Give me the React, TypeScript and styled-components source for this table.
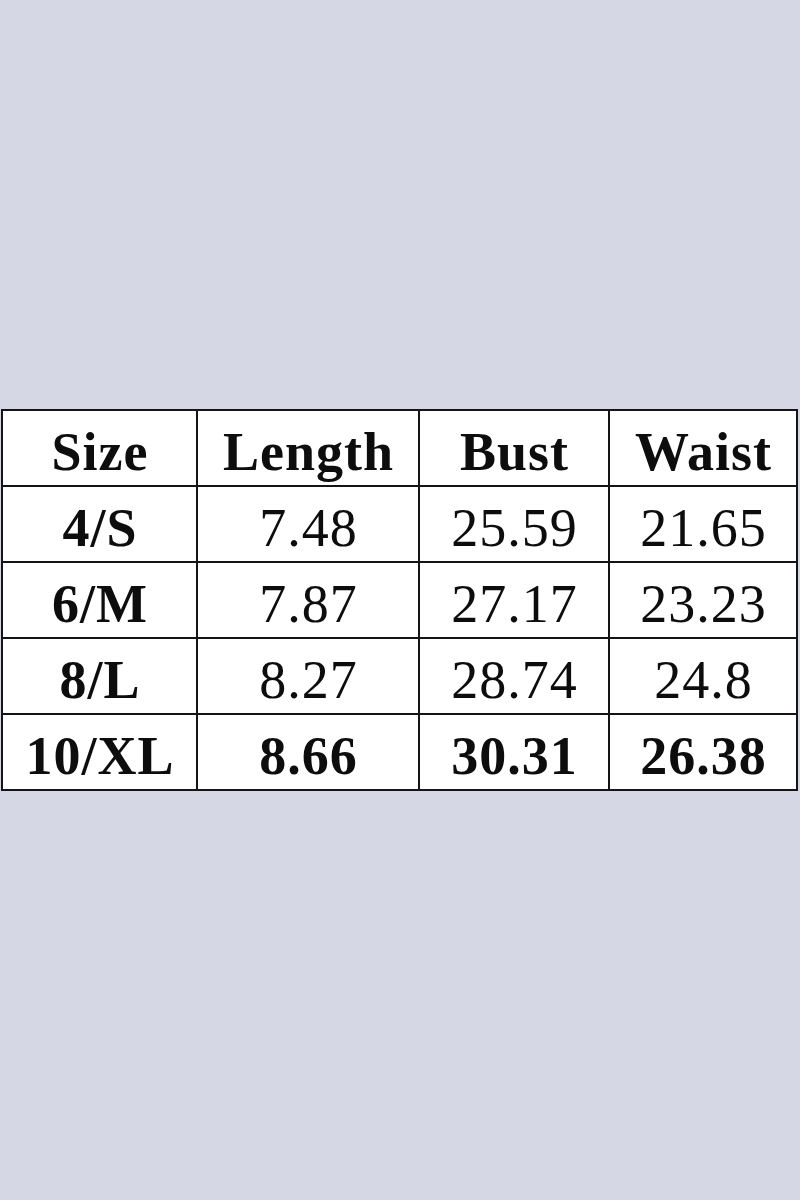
import React from 'react';
import styled, { createGlobalStyle } from 'styled-components';

const GlobalStyle = createGlobalStyle`
  html, body {
    margin: 0;
    padding: 0;
    background: #d5d8e4;
  }
`;

// --- Layout ---

const Page = styled.div`
  width: 800px;
  height: 1200px;
  display: flex;
  flex-direction: column;
  justify-content: center;
  background: #d5d8e4;
`;

const SizeGrid = styled.div`
  margin-left: 1px;
  width: 797px;
  display: grid;
  grid-template-columns: 195px 222px 190px 188px;
  grid-auto-rows: 76px;
  box-sizing: border-box;
  border-left: 2px solid #151515;
  border-top: 2px solid #151515;
  background: #ffffff;
`;

const Cell = styled.div<{ $bold?: boolean }>`
  box-sizing: border-box;
  border-right: 2px solid #151515;
  border-bottom: 2px solid #151515;
  padding-top: 8px;
  padding-left: 1px;
  line-height: 66px;
  text-align: center;
  font-family: 'Liberation Serif', 'Times New Roman', serif;
  font-size: 54px;
  letter-spacing: 1px;
  font-weight: ${(p) => (p.$bold ? 700 : 400)};
  color: #0d0d0d;
  white-space: nowrap;
`;

// --- Data ---

const header = ['Size', 'Length', 'Bust', 'Waist'];

const rows: { cells: string[]; bold?: boolean }[] = [
  { cells: ['4/S', '7.48', '25.59', '21.65'] },
  { cells: ['6/M', '7.87', '27.17', '23.23'] },
  { cells: ['8/L', '8.27', '28.74', '24.8'] },
  { cells: ['10/XL', '8.66', '30.31', '26.38'], bold: true },
];

const App: React.FC = () => {
  return (
    <>
      <GlobalStyle />
      <Page>
        <SizeGrid>
          {header.map((h) => (
            <Cell key={h} $bold>
              {h}
            </Cell>
          ))}
          {rows.map((row) =>
            row.cells.map((value, i) => (
              // first column (size label) is always bold
              <Cell key={row.cells[0] + i} $bold={i === 0 || row.bold}>
                {value}
              </Cell>
            ))
          )}
        </SizeGrid>
      </Page>
    </>
  );
};

export default App;
